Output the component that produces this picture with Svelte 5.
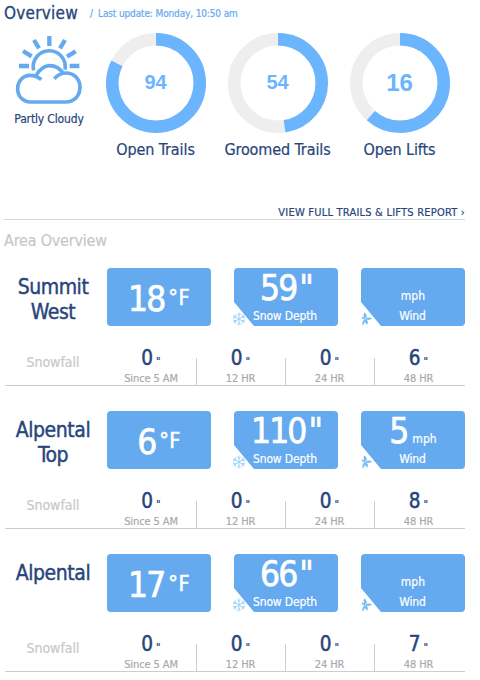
<script>
  const circumference = 2 * Math.PI * 43.75

  let stats = [
    { label: 'Open Trails', value: 94, percent: 82.3 },
    { label: 'Groomed Trails', value: 54, percent: 47.5 },
    { label: 'Open Lifts', value: 16, percent: 61.5, large: true }
  ]

  let periods = ['Since 5 AM', '12 HR', '24 HR', '48 HR']

  let areas = [
    { name: 'Summit West', temp: 18, depth: 59, wind: '', snowfall: [0, 0, 0, 6] },
    { name: 'Alpental Top', temp: 6, depth: 110, wind: 5, snowfall: [0, 0, 0, 8] },
    { name: 'Alpental', temp: 17, depth: 66, wind: '', snowfall: [0, 0, 0, 7] }
  ]
</script>

<main>
  <header>
    <h1>Overview</h1>
    <span class="slash">/</span>
    <span class="update">Last update: Monday, 10:50 am</span>
  </header>

  <section class="overview">
    <div class="weather">
      <svg viewBox="0 0 240 240" width="80" height="80">
        <g class="rays">
          <path d="M121 18v30M75 30l15 25M42 63l26 16M30 108h30M168 30l-15 25M200 64l-26 16M182 108h29" />
        </g>
        <path d="M74 121A48 48 0 1 1 168 119" />
        <path d="M97 149C87 140 75 136 63 136C42 136 26 154 26 176C26 200 43 216 64 216H171C196 216 213 197 213 172C213 147 195 129 171 129C157 129 146 135 136 146" />
        <path d="M81 137C92 118 105 107 122 107C139 107 153 115 163 131" />
      </svg>
      <span>Partly Cloudy</span>
    </div>
    {#each stats as { label, value, percent, large }}
      <div class="stat">
        <svg viewBox="0 0 100 100" width="100" height="100">
          <circle class="track" cx="50" cy="50" r="43.75" />
          <circle
            class="fill"
            cx="50"
            cy="50"
            r="43.75"
            transform="rotate(-90 50 50)"
            stroke-dasharray="{(circumference * percent) / 100} {circumference}"
          />
          <text class:large x="49.5" y={large ? 58 : 56}>{value}</text>
        </svg>
        <span>{label}</span>
      </div>
    {/each}
  </section>

  <a class="report" href="#report">VIEW FULL TRAILS &amp; LIFTS REPORT ›</a>

  <h2>Area Overview</h2>

  {#each areas as { name, temp, depth, wind, snowfall }}
    <article>
      <div class="conditions">
        <h3>{name}</h3>
        <div class="card temp">
          <strong>{temp}</strong><span>°F</span>
        </div>
        <div class="corner">
          <div class="card cut">
            <div class="reading"><strong>{depth}</strong><strong class="inch">"</strong></div>
            <div class="caption">Snow Depth</div>
          </div>
          <svg class="flake" viewBox="0 0 14 14" width="14" height="14">
            <path d="M7 .5v13M1.2 3.7l11.6 6.6M1.2 10.3l11.6-6.6M5 1.5l2 2 2-2M5 12.5l2-2 2 2M1 6l2.8-.8L3.2 2.4M13 6l-2.8-.8.6-2.8M1 8l2.8.8-.6 2.8M13 8l-2.8.8.6 2.8" />
          </svg>
        </div>
        <div class="corner">
          <div class="card cut">
            <div class="reading">
              {#if wind !== ''}<strong>{wind}</strong>{/if}
              <span class="mph">mph</span>
            </div>
            <div class="caption wind">Wind</div>
          </div>
          <svg class="fan" viewBox="0 0 12 14" width="12" height="14">
            <path d="M4 6.4Q1.6 3.6 3.2 .5Q6.6 2.4 5.4 6ZM5 6.3Q8 4.4 11.2 6.5Q8.5 8.6 5.3 7.5ZM5 7Q8 9.8 6.3 12.6Q3.6 11 4 7.5ZM4.2 7.4Q4.2 11.4 1.2 13.4Q.6 10.2 3.2 7.2ZM1 4.2l3.2 2-.6 1.2L.8 6.2Z" />
          </svg>
        </div>
      </div>
      <div class="snowfall">
        <h4>Snowfall</h4>
        {#each snowfall as inches, i}
          <div class="period">
            <div class="amount"><b>{inches}</b><i>"</i></div>
            <small>{periods[i]}</small>
          </div>
        {/each}
      </div>
    </article>
  {/each}
</main>

<style>
  :global(body) {
    background: #fff;
  }
  main {
    width: 461px;
    height: 680px;
    padding-left: 4px;
    overflow: hidden;
    color: #28457b;
    font-family: 'DejaVu Sans Condensed', 'DejaVu Sans', sans-serif;
    font-stretch: condensed;
    -webkit-text-stroke: 0.2px;
  }
  h1,
  h2,
  h3,
  h4 {
    margin: 0;
    font-weight: normal;
  }
  header {
    display: flex;
    height: 27px;
    line-height: 27px;
    color: #65a9ef;
    font-size: 10px;
  }
  h1 {
    width: 86px;
    color: #28457b;
    font-size: 17px;
    letter-spacing: 0.25px;
    -webkit-text-stroke: 0.3px;
  }
  .slash {
    width: 8px;
  }
  .update {
    letter-spacing: -0.13px;
  }
  .overview {
    display: flex;
    height: 178px;
    padding-top: 3px;
    box-sizing: border-box;
  }
  .weather {
    display: flex;
    flex-direction: column;
    flex-shrink: 0;
    align-items: center;
    width: 90px;
    margin-right: 1px;
    font-size: 12px;
    line-height: 18px;
    letter-spacing: -0.15px;
  }
  .weather path {
    fill: none;
    stroke: #65a9ef;
    stroke-width: 11;
  }
  .weather .rays path {
    stroke-width: 13;
  }
  .stat {
    display: flex;
    flex-direction: column;
    flex-shrink: 0;
    align-items: center;
    width: 122px;
    padding-top: 3px;
    font-size: 16px;
    line-height: 33px;
    letter-spacing: -0.1px;
  }
  .stat span {
    margin-right: 1px;
  }
  circle {
    fill: none;
    stroke-width: 12.5;
  }
  .track {
    stroke: #eee;
  }
  .fill {
    stroke: #6bb5ff;
  }
  text {
    fill: #6bb5ff;
    font: bold 20px 'Liberation Sans', sans-serif;
    letter-spacing: 0;
    text-anchor: middle;
    -webkit-text-stroke: 0;
  }
  text.large {
    font-size: 24px;
  }
  .report {
    display: block;
    height: 14px;
    border-bottom: 1px solid #ced6df;
    color: #28457b;
    font-size: 11px;
    line-height: 15px;
    letter-spacing: 0.22px;
    text-align: right;
    text-decoration: none;
  }
  h2 {
    color: #c8c8c8;
    font-size: 16px;
    line-height: 41px;
    letter-spacing: -0.2px;
  }
  article {
    margin: 0 0 18px 1px;
    padding-top: 7px;
    border-bottom: 1px solid #c8ced6;
  }
  .conditions {
    display: grid;
    grid-template-columns: 79px 104px 104px 104px;
    column-gap: 23px;
    height: 58px;
  }
  h3 {
    width: 96px;
    padding-top: 7px;
    font-size: 21px;
    line-height: 25px;
    letter-spacing: -0.45px;
    text-align: center;
    -webkit-text-stroke: 0.4px;
  }
  .card {
    height: 58px;
    border-radius: 4px;
    background: #65a9ef;
    color: #fff;
    text-align: center;
  }
  .card strong {
    font-size: 35px;
    font-weight: normal;
    letter-spacing: -1.9px;
    -webkit-text-stroke: 0.7px;
  }
  .temp {
    display: flex;
    justify-content: center;
    line-height: 62px;
  }
  .temp span {
    margin-left: 4px;
    font-size: 21.5px;
    line-height: 59px;
    letter-spacing: 0.4px;
    -webkit-text-stroke: 0.5px;
  }
  .corner {
    position: relative;
  }
  .cut {
    clip-path: polygon(0 0, 100% 0, 100% 100%, 20px 100%, 0 34px);
  }
  .reading {
    display: flex;
    align-items: baseline;
    justify-content: center;
    height: 40px;
    line-height: 40px;
  }
  /* keeps the baseline of the large figure when there is no reading */
  .reading::before {
    content: '\200b';
    width: 0;
    font-size: 35px;
  }
  .card .inch {
    margin-left: 3px;
    -webkit-text-stroke: 0.6px;
  }
  .mph {
    font-size: 12px;
    letter-spacing: 0.1px;
  }
  strong + .mph {
    margin-left: 5px;
  }
  .caption {
    margin-right: 2px;
    font-size: 12px;
    line-height: 16px;
    letter-spacing: -0.15px;
  }
  .caption.wind {
    margin-right: 1px;
  }
  .flake,
  .fan {
    position: absolute;
    left: -2px;
    bottom: 0;
  }
  .flake path {
    fill: none;
    stroke: #9cd3f8;
    stroke-width: 1;
  }
  .fan {
    left: 0;
    fill: #75bdf2;
  }
  .snowfall {
    display: grid;
    grid-template-columns: 102px 90px 89px 89px 90px;
    height: 59px;
    padding-top: 32px;
    box-sizing: border-box;
  }
  h4 {
    padding-right: 6px;
    color: #c8c8c8;
    font-size: 14px;
    line-height: 9px;
    text-align: center;
  }
  .period {
    height: 27px;
    padding-right: 1px;
    border-right: 1px solid #c8ced6;
    text-align: center;
  }
  .period:last-child {
    padding-right: 3px;
    border-right: 0;
  }
  .amount {
    margin-top: -13px;
    height: 26px;
    line-height: 27px;
  }
  .amount b {
    font-size: 20.5px;
    font-weight: normal;
    -webkit-text-stroke: 0.5px;
  }
  .amount i {
    margin-left: 3px;
    font-size: 11px;
    font-style: normal;
    -webkit-text-stroke: 0.2px;
  }
  small {
    display: block;
    color: #aaa;
    font-size: 11px;
    line-height: 15px;
    letter-spacing: -0.1px;
  }
</style>
